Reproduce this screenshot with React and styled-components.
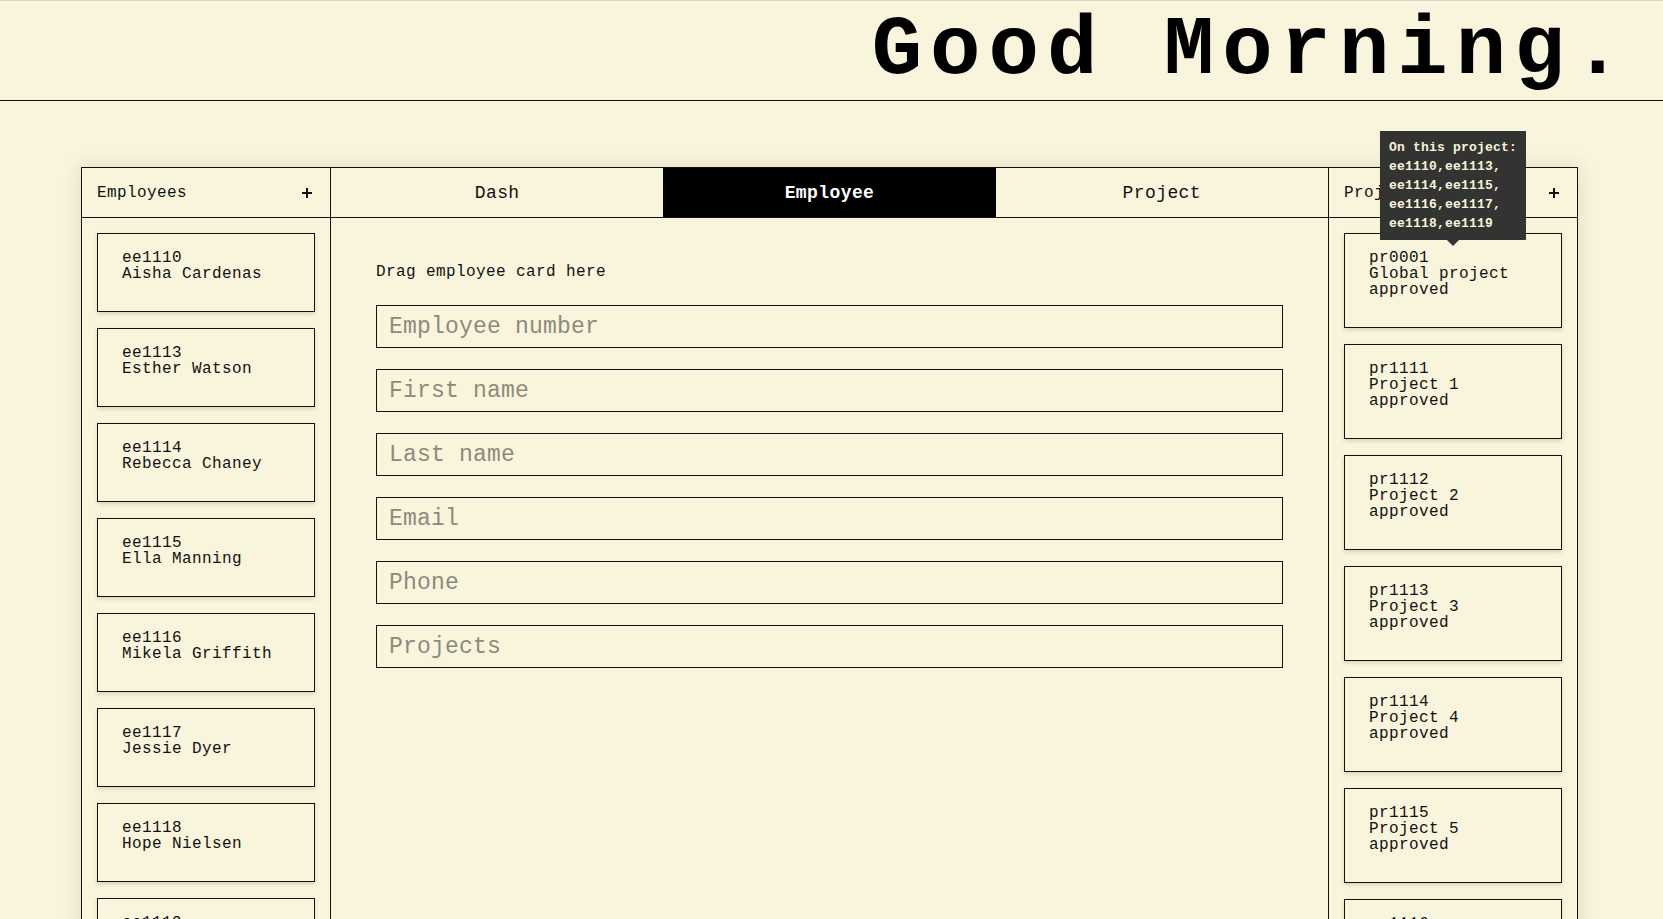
import React from "react";
import styled, { createGlobalStyle } from "styled-components";

const employees = [
  { id: "ee1110", name: "Aisha Cardenas" },
  { id: "ee1113", name: "Esther Watson" },
  { id: "ee1114", name: "Rebecca Chaney" },
  { id: "ee1115", name: "Ella Manning" },
  { id: "ee1116", name: "Mikela Griffith" },
  { id: "ee1117", name: "Jessie Dyer" },
  { id: "ee1118", name: "Hope Nielsen" },
  { id: "ee1119", name: "Kara Lindqvist" },
];

const projects = [
  { id: "pr0001", name: "Global project", status: "approved", team: "ee1110,ee1113,\nee1114,ee1115,\nee1116,ee1117,\nee1118,ee1119" },
  { id: "pr1111", name: "Project 1", status: "approved" },
  { id: "pr1112", name: "Project 2", status: "approved" },
  { id: "pr1113", name: "Project 3", status: "approved" },
  { id: "pr1114", name: "Project 4", status: "approved" },
  { id: "pr1115", name: "Project 5", status: "approved" },
  { id: "pr1116", name: "Project 6", status: "approved" },
];

const tabs = ["Dash", "Employee", "Project"];
const fields = ["Employee number", "First name", "Last name", "Email", "Phone", "Projects"];

function PlusIcon() {
  return (
    <svg width="10" height="10" viewBox="0 0 10 10">
      <rect x="4" y="0" width="2" height="10" fill="#111" />
      <rect x="0" y="4" width="10" height="2" fill="#111" />
    </svg>
  );
}

function App() {
  return (
    <Page>
      <GlobalStyle />
      <Header>
        <Greeting>Good Morning.</Greeting>
      </Header>
      <Board>
        <Sidebar side="left">
          <ColumnHeader>
            <span>Employees</span>
            <PlusIcon />
          </ColumnHeader>
          <CardList>
            {employees.map((e) => (
              <Card key={e.id}>
                {e.id}
                {"\n"}
                {e.name}
              </Card>
            ))}
          </CardList>
        </Sidebar>

        <Main>
          <Tabs>
            {tabs.map((t) => (
              <Tab key={t} active={t === "Employee"}>
                {t}
              </Tab>
            ))}
          </Tabs>
          <Form>
            <DropHint>Drag employee card here</DropHint>
            <Fields>
              {fields.map((f) => (
                <Field key={f} placeholder={f} />
              ))}
            </Fields>
          </Form>
        </Main>

        <Sidebar side="right">
          <ColumnHeader>
            <span>Projects</span>
            <PlusIcon />
          </ColumnHeader>
          <CardList>
            {projects.map((p) => (
              <Card key={p.id}>
                {p.id}
                {"\n"}
                {p.name}
                {"\n"}
                {p.status}
                {p.team && (
                  <Tooltip>
                    On this project:
                    {"\n"}
                    {p.team}
                  </Tooltip>
                )}
              </Card>
            ))}
          </CardList>
        </Sidebar>
      </Board>
    </Page>
  );
}

export default App;

const GlobalStyle = createGlobalStyle`
  html, body {
    margin: 0;
    padding: 0;
    background: #f9f5dc;
    overflow: hidden;
  }
  * {
    box-sizing: border-box;
  }
`;

const Page = styled.div`
  height: 100vh;
  overflow: hidden;
  background: #f9f5dc;
  border-top: 1px solid #d8d5c9;
  color: #111;
  font-family: "Courier New", "Liberation Mono", monospace;
`;

const Header = styled.header`
  height: 100px;
  border-bottom: 1px solid #111;
  display: flex;
  justify-content: flex-end;
  align-items: flex-start;
  padding: 8px 32px 0 0;
`;

const Greeting = styled.h1`
  margin: 0;
  font-size: 84px;
  line-height: 1;
  letter-spacing: 8px;
  font-weight: bold;
  color: #000;
`;

const Board = styled.div`
  margin: 66px 0 0 81px;
  width: 1497px;
  display: grid;
  grid-template-columns: 249px 1fr 249px;
  border: 1px solid #111;
  box-shadow: 0 0 18px rgba(60, 50, 20, 0.14);
`;

const Sidebar = styled.section`
  border-right: ${(p) => (p.side === "left" ? "1px solid #111" : "none")};
  border-left: ${(p) => (p.side === "right" ? "1px solid #111" : "none")};
`;

const ColumnHeader = styled.div`
  height: 50px;
  border-bottom: 1px solid #111;
  display: flex;
  align-items: center;
  justify-content: space-between;
  padding: 0 18px 0 15px;
  font-size: 16px;
  line-height: 16px;
  letter-spacing: 0.4px;
`;

const CardList = styled.div`
  display: flex;
  flex-direction: column;
  gap: 16px;
  padding: 15px;
`;

const Card = styled.div`
  position: relative;
  border: 1px solid #111;
  padding: 16px 24px 29px;
  font-size: 16px;
  line-height: 16px;
  letter-spacing: 0.4px;
  white-space: pre-line;
  box-shadow: 0 2px 4px rgba(60, 50, 20, 0.18);
`;

const Tooltip = styled.div`
  position: absolute;
  left: 50%;
  bottom: calc(100% - 6px);
  transform: translateX(-50%);
  z-index: 5;
  background: #333331;
  color: #f7f2dc;
  padding: 7px 9px;
  font-size: 13px;
  line-height: 19px;
  letter-spacing: 0.2px;
  font-weight: bold;
  white-space: pre;

  &::after {
    content: "";
    position: absolute;
    top: 100%;
    left: 50%;
    margin-left: -6px;
    border-left: 6px solid transparent;
    border-right: 6px solid transparent;
    border-top: 6px solid #333331;
  }
`;

const Main = styled.section`
  display: flex;
  flex-direction: column;
`;

const Tabs = styled.nav`
  display: grid;
  grid-template-columns: 1fr 1fr 1fr;
  height: 50px;
  border-bottom: 1px solid #111;
`;

const Tab = styled.div`
  display: flex;
  align-items: center;
  justify-content: center;
  font-size: 18px;
  letter-spacing: 0.4px;
  background: ${(p) => (p.active ? "#000" : "transparent")};
  color: ${(p) => (p.active ? "#fff" : "#111")};
  font-weight: ${(p) => (p.active ? "bold" : "normal")};
`;

const Form = styled.div`
  padding: 46px 45px 45px;
`;

const DropHint = styled.p`
  margin: 0 0 25px;
  font-size: 16px;
  line-height: 16px;
  letter-spacing: 0.4px;
`;

const Fields = styled.div`
  display: flex;
  flex-direction: column;
  gap: 21px;
`;

const Field = styled.input`
  height: 43px;
  width: 100%;
  border: 1px solid #111;
  background: transparent;
  padding: 0 12px;
  font-family: "Courier New", "Liberation Mono", monospace;
  font-size: 23px;
  letter-spacing: 0.2px;
  color: #111;
  outline: none;

  &::placeholder {
    color: #8d8a7c;
  }
`;
